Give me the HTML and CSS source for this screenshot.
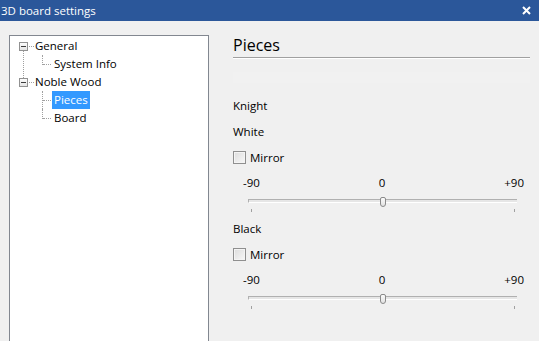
FILE: index.html
```html
<!DOCTYPE html>
<html lang="en">
<head>
    <meta charset="UTF-8">
    <meta name="viewport" content="width=device-width, initial-scale=1.0">
    <title>3D board settings</title>
    <link rel="stylesheet" href="styles.css">
</head>
<body>
    <div class="titlebar">
        <span class="title">3D board settings</span>
        <svg class="close" width="9" height="9" viewBox="0 0 9 9">
            <path d="M1 1 L8 8 M8 1 L1 8" stroke="#fff" stroke-width="2" fill="none"/>
        </svg>
    </div>

    <div class="dialog">
        <!-- left navigation tree -->
        <div class="tree">
            <ul class="tree-root">
                <li>
                    <div class="node"><span class="expander"></span><span class="hline"></span><span class="label">General</span></div>
                    <ul>
                        <li class="last"><div class="node"><span class="branch"></span><span class="label">System Info</span></div></li>
                    </ul>
                </li>
                <li>
                    <div class="node"><span class="expander"></span><span class="hline"></span><span class="label">Noble Wood</span></div>
                    <ul>
                        <li><div class="node"><span class="branch"></span><span class="label selected">Pieces</span></div></li>
                        <li class="last"><div class="node"><span class="branch"></span><span class="label">Board</span></div></li>
                    </ul>
                </li>
            </ul>
        </div>

        <!-- settings page -->
        <div class="page">
            <h2 class="page-title">Pieces</h2>
            <div class="spacer"><div class="band"></div></div>
            <div class="row">Knight</div>

            <section class="side">
                <div class="row">White</div>
                <label class="row check"><span class="checkbox"></span>Mirror</label>
                <div class="scale"><span>-90</span><span>0</span><span>+90</span></div>
                <div class="slider">
                    <div class="track"><span class="thumb" style="left: 50%;"></span></div>
                    <div class="ticks"><i></i><i></i></div>
                </div>
            </section>

            <section class="side">
                <div class="row">Black</div>
                <label class="row check"><span class="checkbox"></span>Mirror</label>
                <div class="scale"><span>-90</span><span>0</span><span>+90</span></div>
                <div class="slider">
                    <div class="track"><span class="thumb" style="left: 50%;"></span></div>
                    <div class="ticks"><i></i><i></i></div>
                </div>
            </section>
        </div>
    </div>
</body>
</html>
```

FILE: styles.css
```css
* {
    margin: 0;
    padding: 0;
    box-sizing: border-box;
}

body {
    font-family: 'Open Sans', 'Noto Sans', sans-serif;
    font-size: 11.5px;
    color: #000;
    background: #f0f0f0;
    height: 341px;
    overflow: hidden;
}

.titlebar {
    height: 21px;
    background: #2b579a;
    color: white;
    display: flex;
    align-items: center;
    justify-content: space-between;
    padding: 0 8px 0 1px;
}

.title {
    line-height: 21px;
}

.close {
    display: block;
}

.dialog {
    display: flex;
    height: 320px;
}

/* tree */
.tree {
    width: 200px;
    margin: 14px 0 0 9px;
    height: 310px;
    background: white;
    border: 1px solid #828790;
    padding-top: 1px;
}

.tree ul {
    list-style: none;
}

.tree-root > li {
    position: relative;
}

.tree-root > li:first-child::before {
    content: "";
    position: absolute;
    left: 13px;
    top: 14px;
    height: 27px;
    border-left: 1px dotted #a0a0a0;
}

.node {
    display: flex;
    align-items: center;
    height: 18px;
}

.expander {
    position: relative;
    width: 9px;
    height: 9px;
    margin-left: 9px;
    border: 1px solid #919191;
    background: linear-gradient(#fcfcfc, #e4e4e4);
}

.expander::after {
    content: "";
    position: absolute;
    left: 1px;
    top: 3px;
    width: 5px;
    height: 1px;
    background: #3b3b3b;
}

.hline {
    width: 5px;
    margin-left: 1px;
    border-top: 1px dotted #a0a0a0;
}

.label {
    padding: 0 2px 0 1px;
    height: 18px;
    line-height: 18px;
    white-space: nowrap;
}

.branch {
    position: relative;
    align-self: stretch;
    width: 9px;
    margin-left: 32px;
    border-left: 1px dotted #a0a0a0;
}

.last .branch {
    align-self: flex-start;
    height: 10px;
}

.branch::after {
    content: "";
    position: absolute;
    left: 0;
    top: 9px;
    width: 8px;
    border-top: 1px dotted #a0a0a0;
}

.branch + .label {
    margin-left: 1px;
    padding-left: 2px;
}

.selected {
    background: #3399ff;
    color: white;
}

/* settings page */
.page {
    width: 297px;
    margin-left: 24px;
}

.page-title {
    font-size: 16px;
    font-weight: normal;
    line-height: 20px;
    height: 24px;
    margin-top: 13px;
    padding-top: 1px;
    border-bottom: 1px solid #a0a0a0;
    box-shadow: 0 1px 0 #fff;
}

.spacer {
    height: 34px;
    padding-top: 14px;
}

.band {
    height: 11px;
    background: #f1f1f1;
}

.row {
    display: flex;
    align-items: center;
    height: 26px;
}

.check {
    gap: 4px;
}

.checkbox {
    width: 13px;
    height: 13px;
    border: 1px solid #8f8f8f;
    background: linear-gradient(135deg, #dcdcdc, #f8f8f8);
    box-shadow: inset 0 0 0 1px #f4f4f4;
}

.scale {
    display: flex;
    justify-content: space-between;
    align-items: center;
    width: 281px;
    margin-left: 10px;
    height: 24px;
}

.slider {
    height: 21px;
    padding-top: 5px;
}

.track {
    position: relative;
    width: 269px;
    height: 4px;
    margin-left: 15px;
    background: #e6e6e6;
    border-top: 1px solid #b0b0b0;
    border-left: 1px solid #b0b0b0;
    border-bottom: 1px solid #fff;
}

.thumb {
    position: absolute;
    top: -3px;
    width: 6px;
    height: 10px;
    margin-left: -3px;
    border: 1px solid #8a8a8a;
    border-radius: 2px 2px 3px 3px;
    background: linear-gradient(#fafafa, #e2e2e2);
}

.ticks {
    display: flex;
    justify-content: space-between;
    width: 264px;
    margin: 6px 0 0 18px;
}

.ticks i {
    width: 1px;
    height: 3px;
    background: #a0a0a0;
}
```
